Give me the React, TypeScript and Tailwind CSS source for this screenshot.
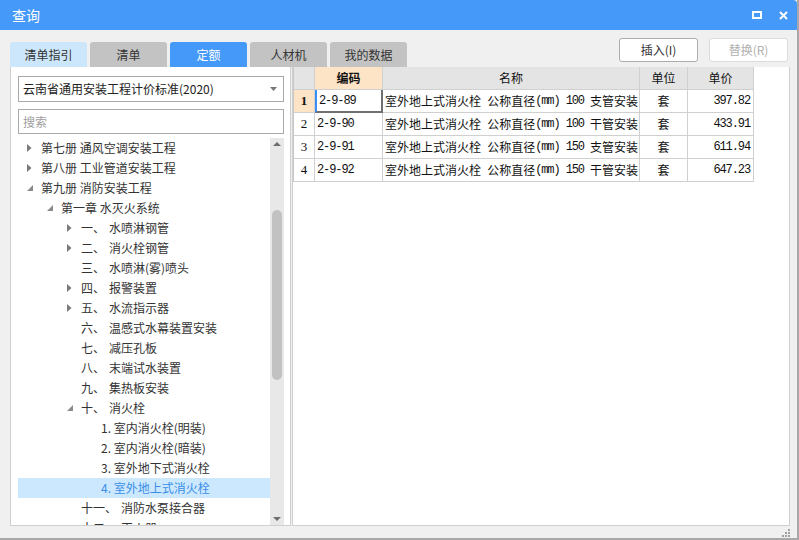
import React from 'react';

type Node = {
  level: number;
  expander?: 'right' | 'down';
  prefix?: string;
  label: string;
  selected?: boolean;
};

const nodes: Node[] = [
  { level: 0, expander: 'right', label: '第七册 通风空调安装工程' },
  { level: 0, expander: 'right', label: '第八册 工业管道安装工程' },
  { level: 0, expander: 'down', label: '第九册 消防安装工程' },
  { level: 1, expander: 'down', label: '第一章 水灭火系统' },
  { level: 2, expander: 'right', prefix: '一、', label: '水喷淋钢管' },
  { level: 2, expander: 'right', prefix: '二、', label: '消火栓钢管' },
  { level: 2, prefix: '三、', label: '水喷淋(雾)喷头' },
  { level: 2, expander: 'right', prefix: '四、', label: '报警装置' },
  { level: 2, expander: 'right', prefix: '五、', label: '水流指示器' },
  { level: 2, prefix: '六、', label: '温感式水幕装置安装' },
  { level: 2, prefix: '七、', label: '减压孔板' },
  { level: 2, prefix: '八、', label: '末端试水装置' },
  { level: 2, prefix: '九、', label: '集热板安装' },
  { level: 2, expander: 'down', prefix: '十、', label: '消火栓' },
  { level: 3, label: '1. 室内消火栓(明装)' },
  { level: 3, label: '2. 室内消火栓(暗装)' },
  { level: 3, label: '3. 室外地下式消火栓' },
  { level: 3, label: '4. 室外地上式消火栓', selected: true },
  { level: 2, prefix: '十一、', label: '消防水泵接合器' },
  { level: 2, prefix: '十二、', label: '灭火器' },
];

const rows = [
  { code: '2-9-89', name: '室外地上式消火栓 公称直径(mm) 100 支管安装', unit: '套', price: '397.82' },
  { code: '2-9-90', name: '室外地上式消火栓 公称直径(mm) 100 干管安装', unit: '套', price: '433.91' },
  { code: '2-9-91', name: '室外地上式消火栓 公称直径(mm) 150 支管安装', unit: '套', price: '611.94' },
  { code: '2-9-92', name: '室外地上式消火栓 公称直径(mm) 150 干管安装', unit: '套', price: '647.23' },
];

const tabs = [
  { label: '清单指引', cls: 'bg-[#cce6fb] text-[#333]' },
  { label: '清单', cls: 'bg-[#c3c3c3] text-[#333]' },
  { label: '定额', cls: 'bg-[#4499f9] text-white' },
  { label: '人材机', cls: 'bg-[#c3c3c3] text-[#333]' },
  { label: '我的数据', cls: 'bg-[#c3c3c3] text-[#333]' },
];

const indent = ['pl-[9px]', 'pl-[29px]', 'pl-[49px]', 'pl-[83px]'];

// half-width ascii runs like the old SimSun grid font
function Mixed({ text }: { text: string }) {
  const parts = text.match(/[\x00-\x7f]+|[^\x00-\x7f]+/g) || [];
  return (
    <>
      {parts.map((p, i) =>
        /^[\x00-\x7f]/.test(p) ? (
          <span
            key={i}
            className="text-[12px] tracking-[-1.1px] whitespace-pre"
            style={{ fontFamily: '"Liberation Mono", monospace' }}
          >
            {p}
          </span>
        ) : (
          <span key={i}>{p}</span>
        )
      )}
    </>
  );
}

function Expander({ kind }: { kind?: 'right' | 'down' }) {
  if (!kind) return <span className="w-[14px] shrink-0" />;
  return (
    <span className="w-[14px] shrink-0 flex items-center">
      {kind === 'right' ? (
        <svg width="5" height="8" viewBox="0 0 5 8">
          <path d="M0 0 L4.5 4 L0 8 Z" fill="#7a7a7a" />
        </svg>
      ) : (
        <svg width="6" height="6" viewBox="0 0 6 6">
          <path d="M6 0 L6 6 L0 6 Z" fill="#8a8a8a" />
        </svg>
      )}
    </span>
  );
}

export default function App() {
  return (
    <div
      className="w-[799px] h-[540px] bg-[#f0f0f0] flex flex-col overflow-hidden border-r-2 border-b-2 border-[#a8a8a8]"
      style={{ fontFamily: '"Noto Sans CJK SC", "Microsoft YaHei", sans-serif' }}
    >
      {/* Title bar */}
      <div className="h-[30px] shrink-0 bg-[#4499f9] flex items-center justify-between pl-[12px] pr-[9px] rounded-tr-[4px]">
        <span className="text-white text-[14px]">查询</span>
        <div className="flex items-center gap-[17px]">
          <svg width="10" height="8" viewBox="0 0 10 8">
            <rect x="1" y="1" width="8" height="6" fill="none" stroke="white" strokeWidth="2" />
          </svg>
          <svg width="9" height="9" viewBox="0 0 9 9">
            <path d="M1 1 L8 8 M8 1 L1 8" stroke="white" strokeWidth="2" />
          </svg>
        </div>
      </div>

      <div className="flex-1 flex flex-col pl-[10px] pr-[7px]">
        {/* Tabs + buttons */}
        <div className="h-[37px] shrink-0 flex justify-between">
          <div className="flex items-end gap-[3px]">
            {tabs.map((t) => (
              <div
                key={t.label}
                className={`w-[77px] h-[25px] rounded-t-[3px] flex items-center justify-center text-[12px] ${t.cls}`}
              >
                {t.label}
              </div>
            ))}
          </div>
          <div className="flex gap-[11px] pt-[8px] pr-[2px]">
            <button className="w-[79px] h-[24px] bg-white border border-[#adadad] rounded-[3px] text-[12px] text-[#333]">
              插入(I)
            </button>
            <button className="w-[79px] h-[24px] bg-white border border-[#dcdcdc] rounded-[3px] text-[12px] text-[#b0b0b0]">
              替换(R)
            </button>
          </div>
        </div>

        {/* Panels */}
        <div className="h-[459px] shrink-0 flex">
          {/* Left panel */}
          <div className="w-[281px] shrink-0 bg-white border-l border-r border-b border-[#cfcfcf] flex flex-col pl-[7px] pr-[6px] pt-[9px]">
            <div className="h-[26px] shrink-0 border border-[#a9a9a9] flex items-center justify-between pl-[4px] pr-[6px] text-[12px] text-[#222]">
              <span>云南省通用安装工程计价标准(2020)</span>
              <svg width="7" height="4" viewBox="0 0 7 4">
                <path d="M0 0 L7 0 L3.5 4 Z" fill="#777" />
              </svg>
            </div>
            <div className="h-[25px] shrink-0 mt-[7px] border border-[#a9a9a9] flex items-center pl-[4px] text-[12px] text-[#a0a0a0]">
              搜索
            </div>
            <div className="mt-[4px] flex-1 flex overflow-hidden">
              <div className="flex-1 overflow-hidden">
                {nodes.map((n, i) => (
                  <div
                    key={i}
                    className={`h-[20px] flex items-center text-[12px] whitespace-nowrap ${indent[n.level]} ${
                      n.selected ? 'bg-[#cce8ff] text-[#3a8ee6]' : 'text-[#333]'
                    }`}
                  >
                    {n.level < 3 && <Expander kind={n.expander} />}
                    {n.prefix ? (
                      <>
                        <span className={n.prefix.length > 2 ? 'w-[40px]' : 'w-[28px]'}>{n.prefix}</span>
                        <span>{n.label}</span>
                      </>
                    ) : (
                      <span>{n.label}</span>
                    )}
                  </div>
                ))}
              </div>
              {/* Scrollbar */}
              <div className="w-[14px] shrink-0 bg-[#e8e8e8] flex flex-col items-center">
                <div className="h-[12px] flex items-center">
                  <svg width="8" height="4" viewBox="0 0 8 4">
                    <path d="M0 4 L4 0 L8 4 Z" fill="#6e6e6e" />
                  </svg>
                </div>
                <div className="mt-[60px] w-[10px] h-[170px] rounded-full bg-[#c2c2c2]" />
                <div className="flex-1" />
                <div className="h-[12px] flex items-center">
                  <svg width="8" height="4" viewBox="0 0 8 4">
                    <path d="M0 0 L8 0 L4 4 Z" fill="#6e6e6e" />
                  </svg>
                </div>
              </div>
            </div>
          </div>

          {/* Right panel */}
          <div className="flex-1 ml-[1px] bg-white border border-t-0 border-[#cfcfcf]">
            <div className="grid grid-cols-[21px_68px_257px_48px_66px] w-max border-l border-[#c8c8c8] text-[12px] text-[#111]">
              <div className="h-[23px] bg-[#e4e4e4] border-r border-b border-[#d0d0d0]" />
              <div className="h-[23px] bg-[#fde4c6] border-r border-b border-[#d0d0d0] flex items-center justify-center font-bold">
                编码
              </div>
              <div className="h-[23px] bg-[#e4e4e4] border-r border-b border-[#d0d0d0] flex items-center justify-center">
                名称
              </div>
              <div className="h-[23px] bg-[#e4e4e4] border-r border-b border-[#d0d0d0] flex items-center justify-center">
                单位
              </div>
              <div className="h-[23px] bg-[#e4e4e4] border-r border-b border-[#d0d0d0] flex items-center justify-center">
                单价
              </div>
              {rows.map((r, i) => (
                <React.Fragment key={r.code}>
                  <div
                    className={`h-[23px] border-r border-b border-[#d0d0d0] flex items-center justify-center text-[13px] ${
                      i === 0 ? 'bg-[#fde4c6] font-bold' : 'bg-white'
                    }`}
                    style={{ fontFamily: '"Liberation Serif", serif' }}
                  >
                    {i + 1}
                  </div>
                  <div
                    className={`h-[23px] flex items-center pl-[2px] ${
                      i === 0
                        ? 'border-l-2 border-l-[#3b8ff0] border-r-2 border-r-[#707070] border-b-2 border-b-[#707070]'
                        : 'border-r border-b border-[#d0d0d0]'
                    }`}
                  >
                    <Mixed text={r.code} />
                  </div>
                  <div className="h-[23px] border-r border-b border-[#d0d0d0] flex items-center pl-[2px] whitespace-nowrap overflow-hidden">
                    <Mixed text={r.name} />
                  </div>
                  <div className="h-[23px] border-r border-b border-[#d0d0d0] flex items-center justify-center">
                    {r.unit}
                  </div>
                  <div className="h-[23px] border-r border-b border-[#d0d0d0] flex items-center justify-end pr-[3px]">
                    <Mixed text={r.price} />
                  </div>
                </React.Fragment>
              ))}
            </div>
          </div>
        </div>

        {/* Bottom strip with resize grip */}
        <div className="flex-1 flex justify-end items-end pb-[1px]">
          <svg width="8" height="8" viewBox="0 0 8 8">
            <rect x="6" y="0" width="2" height="2" fill="#a0a0a0" />
            <rect x="3" y="3" width="2" height="2" fill="#a0a0a0" />
            <rect x="6" y="3" width="2" height="2" fill="#a0a0a0" />
            <rect x="0" y="6" width="2" height="2" fill="#a0a0a0" />
            <rect x="3" y="6" width="2" height="2" fill="#a0a0a0" />
            <rect x="6" y="6" width="2" height="2" fill="#a0a0a0" />
          </svg>
        </div>
      </div>
    </div>
  );
}
